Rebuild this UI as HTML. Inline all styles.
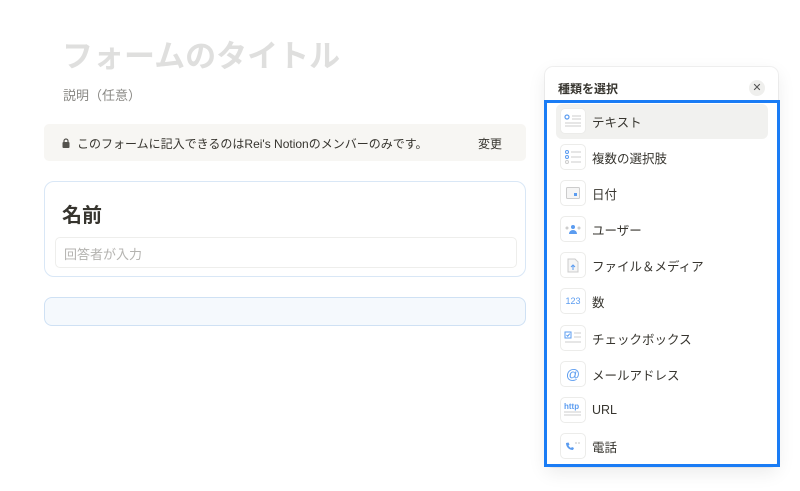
<!DOCTYPE html><html><head><meta charset="utf-8"><style>
*{box-sizing:border-box;margin:0;padding:0}
body{width:800px;height:491px;background:#fff;font-family:"Liberation Sans","Noto Sans CJK JP",sans-serif;position:relative;overflow:hidden;color:#37352f}
.a{position:absolute}
.title{left:62px;top:31px;font-size:31px;font-weight:bold;color:#dfdfde;letter-spacing:0}
.desc{left:63px;top:85px;font-size:13px;color:#8a8985}
.ban{left:44px;top:124px;width:482px;height:37px;background:#f7f6f3;border-radius:5px;font-size:12px;color:#37352f}
.card{left:44px;top:181px;width:482px;height:96px;border:1px solid #d9e7f6;border-radius:10px}
.inp{left:10px;top:55px;width:462px;height:31px;border:1px solid #eeeeec;border-radius:5px;font-size:13px;color:#b4b3b0;padding:6px 8px}
.bot{left:44px;top:297px;width:482px;height:29px;background:#f5f9fd;border:1px solid #cfe1f4;border-radius:8px}
.panel{left:545px;top:67px;width:233px;height:400px;background:#fff;border-radius:8px;box-shadow:0 0 0 1px rgba(0,0,0,.05),0 6px 18px rgba(0,0,0,.08)}
.blue{left:544px;top:100px;width:236px;height:367px;border:3px solid #1a7cf5}
.row{position:absolute;left:556px;width:212px;height:35px;border-radius:6px;font-size:12.5px}
.row.h{background:#f1f1ef}
.ic{position:absolute;left:4px;top:4px;width:26px;height:26px;border:1px solid #ececea;border-radius:5px;background:#fff;display:flex;align-items:center;justify-content:center}
.t{position:absolute;left:36px;top:8px}
</style></head><body>
<div class="a title">フォームのタイトル</div>
<div class="a desc">説明（任意）</div>
<div class="a ban"><svg class="a" style="left:18px;top:14px" width="8" height="10" viewBox="0 0 8 10"><rect x="0.5" y="4" width="7" height="6" rx="1" fill="#55534e"/><path d="M2 4V3a2 2 0 0 1 4 0v1" stroke="#55534e" fill="none" stroke-width="1.2"/></svg><span class="a" style="left:33px;top:11px">このフォームに記入できるのはRei's Notionのメンバーのみです。</span><span class="a" style="left:434px;top:11px">変更</span></div>
<div class="a card"><div class="a" style="left:17px;top:17px;font-size:20px;font-weight:bold">名前</div><div class="a inp">回答者が入力</div></div>
<div class="a bot"></div>
<div class="a panel"><div class="a" style="left:13px;top:13px;font-size:12px;font-weight:bold">種類を選択</div><div class="a" style="left:204px;top:13px;width:16px;height:16px;border-radius:50%;background:#efefed;font-size:11px;text-align:center;line-height:16px;color:#555">✕</div></div>
<div class="row h" style="top:104px"><div class="ic"><svg width="18" height="14"><circle cx="3" cy="3" r="2" fill="none" stroke="#5b9cf0" stroke-width="1.2"/><path d="M8 2h9M8 5h9M1 9h16M1 12h16" stroke="#ccc"/></svg></div><div class="t">テキスト</div></div>
<div class="row" style="top:140px"><div class="ic"><svg width="18" height="14"><circle cx="3" cy="2" r="1.5" fill="none" stroke="#5b9cf0"/><circle cx="3" cy="7" r="1.5" fill="none" stroke="#5b9cf0"/><circle cx="3" cy="12" r="1.5" fill="none" stroke="#ccc"/><path d="M7 2h10M7 7h10M7 12h10" stroke="#ccc"/></svg></div><div class="t">複数の選択肢</div></div>
<div class="row" style="top:176px"><div class="ic"><svg width="14" height="12"><rect x="0.5" y="0.5" width="13" height="11" rx="1" fill="#f5f5f5" stroke="#ccc"/><rect x="8" y="6" width="3" height="3" fill="#5b9cf0"/></svg></div><div class="t">日付</div></div>
<div class="row" style="top:212px"><div class="ic"><svg width="18" height="10"><circle cx="9" cy="3" r="2" fill="#5b9cf0"/><path d="M5 10a4 4 0 0 1 8 0z" fill="#5b9cf0"/><circle cx="3" cy="4" r="1.5" fill="#ccc"/><circle cx="15" cy="4" r="1.5" fill="#ccc"/></svg></div><div class="t">ユーザー</div></div>
<div class="row" style="top:248px"><div class="ic"><svg width="12" height="15"><path d="M1 1h7l3 3v10H1z" fill="#f5f5f5" stroke="#ccc"/><path d="M6 12V7M4 9l2-2 2 2" stroke="#5b9cf0" fill="none"/></svg></div><div class="t">ファイル＆メディア</div></div>
<div class="row" style="top:284px"><div class="ic" style="font-size:9px;color:#5b9cf0">123</div><div class="t">数</div></div>
<div class="row" style="top:321px"><div class="ic"><svg width="18" height="14"><rect x="1" y="1" width="6" height="6" fill="none" stroke="#5b9cf0"/><path d="M2.5 4l1.2 1.2 2-2.5" stroke="#5b9cf0" fill="none"/><path d="M10 2h7M10 6h7M1 11h16" stroke="#ccc"/></svg></div><div class="t">チェックボックス</div></div>
<div class="row" style="top:357px"><div class="ic" style="font-size:14px;color:#5b9cf0">@</div><div class="t">メールアドレス</div></div>
<div class="row" style="top:393px"><div class="ic"><svg width="20" height="16"><text x="1" y="7" font-size="8" font-weight="bold" fill="#5b9cf0" font-family="Liberation Sans">http</text><path d="M1 10h17M1 13h17" stroke="#ccc"/></svg></div><div class="t" style="top:10px">URL</div></div>
<div class="row" style="top:429px"><div class="ic"><svg width="18" height="12"><path d="M2 3c0 4 3 7 7 7l1-2-2-1-1 1c-1-.5-2-1.5-2.5-2.5l1-1-1-2z" fill="#5b9cf0"/><circle cx="12" cy="3" r="0.9" fill="#ccc"/><circle cx="15" cy="3" r="0.9" fill="#ccc"/></svg></div><div class="t">電話</div></div>
<div class="a blue"></div>
</body></html>
